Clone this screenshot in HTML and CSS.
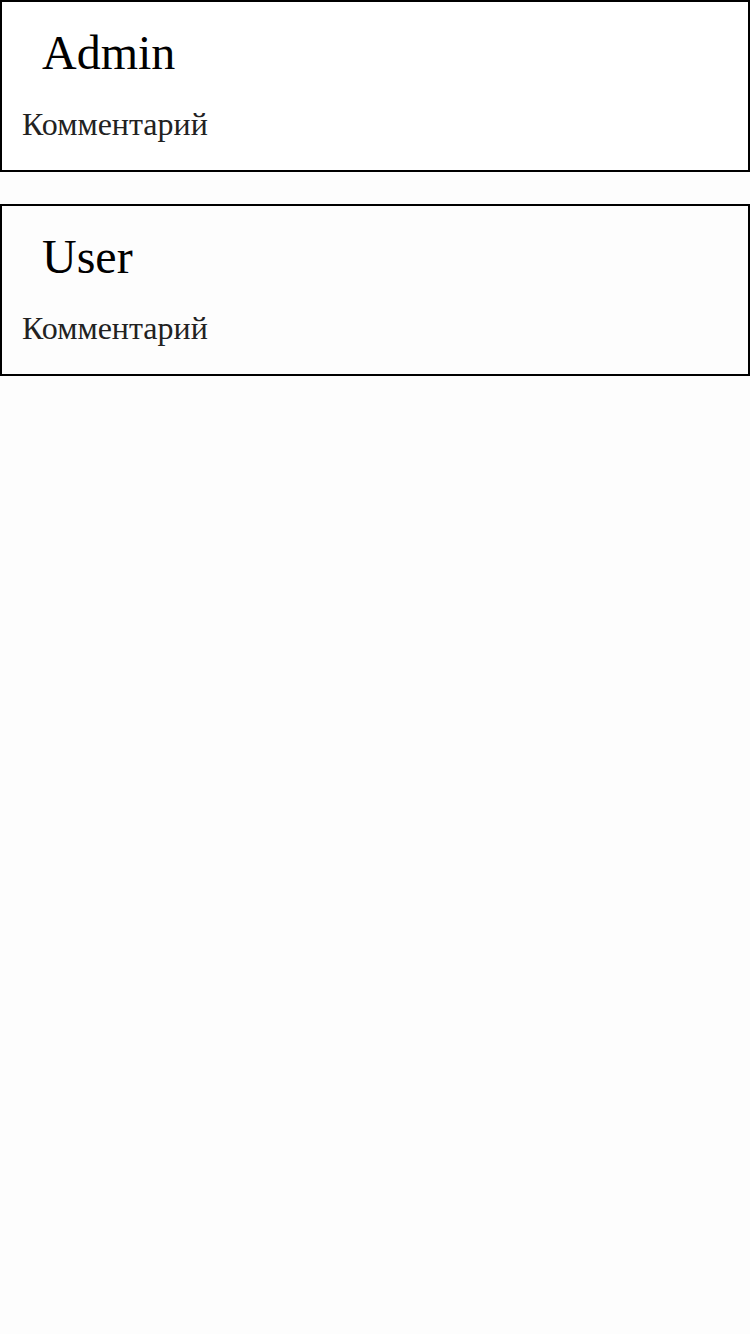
FILE: index.html
```html
<!DOCTYPE html>
<html lang="ru">
<head>
<meta charset="utf-8">
<link rel="stylesheet" href="styles.css">
</head>
<body>
<div class="list">
  <div class="card">
    <div class="name">Admin</div>
    <div class="comment">Комментарий</div>
  </div>
  <div class="card">
    <div class="name">User</div>
    <div class="comment">Комментарий</div>
  </div>
</div>
</body>
</html>
```
FILE: styles.css
```css
html, body {
  margin: 0;
  padding: 0;
  background: #fdfdfd;
}
body {
  font-family: "Liberation Serif", "Times New Roman", serif;
  width: 750px;
}
.list {
  display: flex;
  flex-direction: column;
  gap: 32px;
}
.card {
  border: 2px solid #000;
  background: #fff;
  padding: 0 20px;
  height: 168px;
  box-sizing: content-box;
  display: flex;
  flex-direction: column;
}
.card + .card {
  background: #fdfdfd;
}
.name {
  font-size: 48px;
  line-height: 55px;
  color: #000;
  margin: 23px 0 0 20px;
}
.comment {
  font-size: 32px;
  line-height: 37px;
  color: #222;
  margin-top: 26px;
}
```
